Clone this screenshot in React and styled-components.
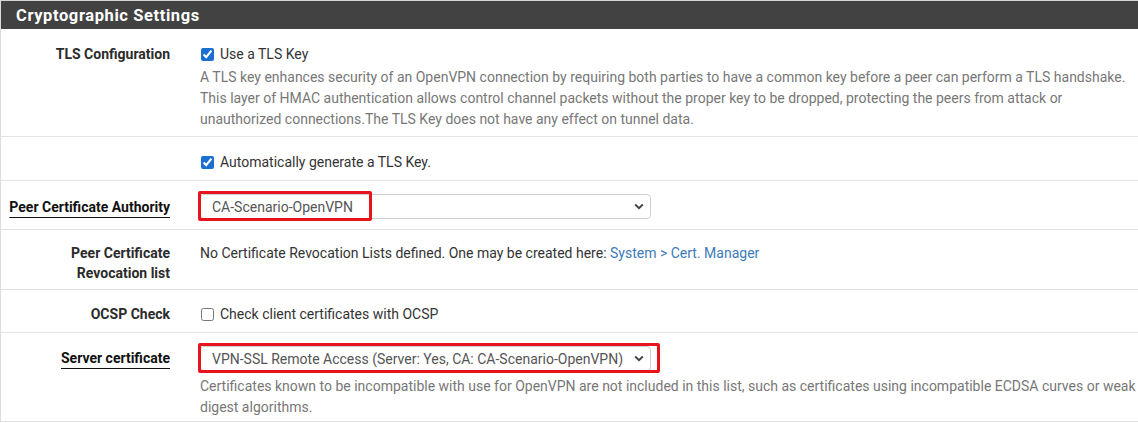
import React from 'react'
import styled, { createGlobalStyle } from 'styled-components'

const GlobalStyle = createGlobalStyle`
  body {
    margin: 0;
    background: #fff;
    font-family: Roboto, 'Liberation Sans', sans-serif;
    font-size: 14px;
    color: #212121;
  }
`

const ChevronIcon = () => (
  <svg width='10' height='7' viewBox='0 0 10 7'>
    <path d='M1.2 1.5 L5 5.2 L8.8 1.5' fill='none' stroke='#444' strokeWidth='1.9' />
  </svg>
)

const App = () => {
  return (
    <Panel>
      <GlobalStyle />
      <Heading>Cryptographic Settings</Heading>

      <Row $pt={15} $pb={6}>
        <Label>TLS Configuration</Label>
        <Content>
          <CheckLine>
            <Checkbox type='checkbox' defaultChecked />
            Use a TLS Key
          </CheckLine>
          <Help $mt={3} $max={926}>
            A TLS key enhances security of an OpenVPN connection by requiring both parties to have a common key before
            a peer can perform a TLS handshake. This layer of HMAC authentication allows control channel packets without
            the proper key to be dropped, protecting the peers from attack or unauthorized connections.The TLS Key does
            not have any effect on tunnel data.
          </Help>
        </Content>
      </Row>

      <Row $pt={15} $pb={8}>
        <Label />
        <Content>
          <CheckLine>
            <Checkbox type='checkbox' defaultChecked />
            Automatically generate a TLS Key.
          </CheckLine>
        </Content>
      </Row>

      <Row $pt={13} $pb={10} $center>
        <Label>
          <Underlined>Peer Certificate Authority</Underlined>
        </Label>
        <Content>
          <SelectBox>
            <span>CA-Scenario-OpenVPN</span>
            <ChevronIcon />
            <Highlight $width={174} />
          </SelectBox>
        </Content>
      </Row>

      <Row $pt={13} $pb={6}>
        <Label>Peer Certificate Revocation list</Label>
        <Content>
          <Text>
            No Certificate Revocation Lists defined. One may be created here:{' '}
            <Link href='#'>System &gt; Cert. Manager</Link>
          </Text>
        </Content>
      </Row>

      <Row $pt={14} $pb={8}>
        <Label>OCSP Check</Label>
        <Content>
          <CheckLine>
            <Checkbox type='checkbox' />
            Check client certificates with OCSP
          </CheckLine>
        </Content>
      </Row>

      <Row $pt={13} $pb={3}>
        <Label $top={2}>
          <Underlined>Server certificate</Underlined>
        </Label>
        <Content>
          <SelectBox>
            <span>VPN-SSL Remote Access (Server: Yes, CA: CA-Scenario-OpenVPN)</span>
            <ChevronIcon />
            <Highlight $width={462} />
          </SelectBox>
          <Help $mt={5}>
            Certificates known to be incompatible with use for OpenVPN are not included in this list, such as
            certificates using incompatible ECDSA curves or weak digest algorithms.
          </Help>
        </Content>
      </Row>
    </Panel>
  )
}

export default App

// styling
const Panel = styled.div`
  width: 1138px;
  border-left: 1px solid #dcdcdc;
  box-sizing: border-box;
`
const Heading = styled.div`
  height: 29px;
  line-height: 30px;
  padding: 0 15px;
  background: #424242;
  border-top: 1px solid #d6d6d6;
  box-sizing: border-box;
  color: #fff;
  font-size: 16.5px;
  font-weight: 700;
  letter-spacing: 0.6px;
`
const Row = styled.div`
  display: grid;
  grid-template-columns: 169px 1fr;
  column-gap: 30px;
  align-items: ${({ $center }) => ($center ? 'center' : 'start')};
  padding: ${({ $pt }) => $pt ?? 12}px 0 ${({ $pb }) => $pb ?? 11}px;
  border-bottom: 1px solid #e3e3e3;
`
const Label = styled.div`
  text-align: right;
  font-weight: 700;
  color: #2b2b2b;
  line-height: 20px;
  padding-top: ${({ $top }) => $top ?? 0}px;
`
const Underlined = styled.span`
  color: #111;
  text-decoration: underline;
  text-decoration-thickness: 1px;
  text-underline-offset: 5px;
`
const Content = styled.div`
  min-width: 0;
  color: #333;
`
const CheckLine = styled.label`
  display: flex;
  align-items: center;
  gap: 6px;
  line-height: 20px;
  color: #333;
`
const Checkbox = styled.input`
  width: 13px;
  height: 13px;
  margin: 0 0 0 1px;
  accent-color: #1a6fd0;
`
const Help = styled.div`
  margin-top: ${({ $mt }) => $mt ?? 5}px;
  color: #777;
  line-height: 21px;
  max-width: ${({ $max }) => ($max ? `${$max}px` : 'none')};
`
const Text = styled.div`
  line-height: 20px;
  color: #333;
`
const Link = styled.a`
  color: #3b7bb9;
  text-decoration: none;
`
const SelectBox = styled.div`
  position: relative;
  width: 451px;
  height: 25px;
  box-sizing: border-box;
  display: flex;
  align-items: center;
  justify-content: space-between;
  padding: 0 6px 0 11px;
  border: 1px solid #cfcfcf;
  border-radius: 4px;
  color: #555;
  background: #fff;
`
const Highlight = styled.div`
  position: absolute;
  left: -3px;
  top: -4px;
  width: ${({ $width }) => $width}px;
  height: 30px;
  border: 3px solid #e8141b;
  border-radius: 2px;
  box-sizing: border-box;
  pointer-events: none;
`
